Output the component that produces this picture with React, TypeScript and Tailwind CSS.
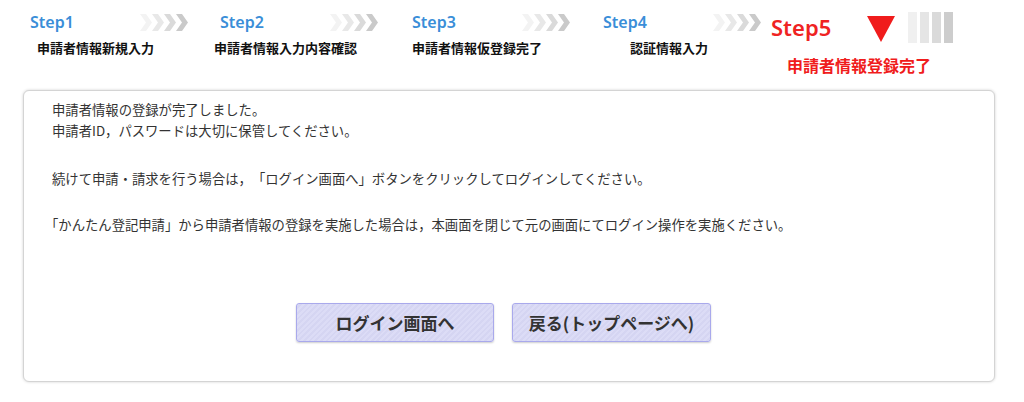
import React from "react";

const Chevrons = () => {
  const colors = ["#f3f3f3", "#e8e8e8", "#dadada", "#cacaca"];
  return (
    <svg width="48" height="17" viewBox="0 0 48 17">
      {colors.map((c, i) => {
        const x = i * 12;
        return (
          <polygon
            key={i}
            points={`${x},0 ${x + 6},0 ${x + 12},8.5 ${x + 6},17 ${x},17 ${x + 6},8.5`}
            fill={c}
          />
        );
      })}
    </svg>
  );
};

const steps = [
  { n: "Step1", label: "申請者情報新規入力", w: "w-[190px]", ml: "ml-[7px]" },
  { n: "Step2", label: "申請者情報入力内容確認", w: "w-[192px]", ml: "ml-[-6px]" },
  { n: "Step3", label: "申請者情報仮登録完了", w: "w-[191px]", ml: "ml-0" },
  { n: "Step4", label: "認証情報入力", w: "w-[168px]", ml: "ml-[27px]" },
];

export default function App() {
  const font = "font-['Noto_Sans','Noto_Sans_CJK_JP',sans-serif]";
  return (
    <div className={`w-[1024px] h-[402px] bg-white overflow-hidden ${font}`}>
      {/* Header steps */}
      <div className="flex items-start pl-[30px] pt-[10px] h-[90px]">
        {steps.map((s) => (
          <div key={s.n} className={`${s.w} shrink-0 flex flex-col`}>
            <div className="flex items-center h-[24px]">
              <span className="w-[110px] text-[16px] leading-[24px] font-semibold text-[#3a8ed8]">
                {s.n}
              </span>
              <Chevrons />
            </div>
            <div
              className={`${s.ml} mt-[5px] text-[13px] leading-[18px] font-bold text-[#111] whitespace-nowrap font-['Noto_Sans_CJK_JP',sans-serif]`}
            >
              {s.label}
            </div>
          </div>
        ))}
        <div className="flex flex-col shrink-0">
          <div className="flex items-center h-[32px] mt-[1px]">
            <span className="w-[96px] text-[22px] leading-[32px] font-semibold text-[#ef2323]">
              Step5
            </span>
            <svg width="28" height="26" viewBox="0 0 28 26" className="mt-[3px]">
              <polygon points="0,0 28,0 14,26" fill="#f01c1c" />
            </svg>
            <div className="flex gap-[3px] ml-[13px] h-[31px]">
              <div className="w-[9px] bg-[#f0f0f0]" />
              <div className="w-[9px] bg-[#e5e5e5]" />
              <div className="w-[9px] bg-[#dadada]" />
              <div className="w-[9px] bg-[#cdcdcd]" />
            </div>
          </div>
          <div className="ml-[16px] mt-[12px] text-[16px] leading-[20px] font-bold text-[#f01c1c] whitespace-nowrap font-['Noto_Sans_CJK_JP',sans-serif]">
            申請者情報登録完了
          </div>
        </div>
      </div>

      {/* Card */}
      <div className="ml-[23px] w-[972px] h-[292px] border border-[#d4d4d4] rounded-[6px] shadow-[0_0_3px_rgba(0,0,0,0.18)] bg-white pl-[28px] pt-[8px] text-[13.33px] leading-[21px] text-[#333] font-['Noto_Sans_CJK_JP',sans-serif] [text-spacing-trim:space-all] flex flex-col">
        <p>
          申請者情報の登録が完了しました。
          <br />
          申請者ID，パスワードは大切に保管してください。
        </p>
        <p className="mt-[27px]">
          続けて申請・請求を行う場合は，「ログイン画面へ」ボタンをクリックしてログインしてください。
        </p>
        <p className="mt-[25px] ml-[-7px]">
          「かんたん登記申請」から申請者情報の登録を実施した場合は，本画面を閉じて元の画面にてログイン操作を実施ください。
        </p>
        <div className="flex justify-center gap-[18px] mt-[68px] pr-[39px]">
          <button className="w-[198px] h-[39px] rounded-[3px] border border-[#a9a9ec] shadow-[0_1px_2px_rgba(0,0,0,0.2)] bg-[repeating-linear-gradient(135deg,#dcdcf6_0px,#dcdcf6_2px,#d5d5f2_2px,#d5d5f2_4px)] text-[17px] font-bold text-[#333]">
            ログイン画面へ
          </button>
          <button className="w-[199px] h-[39px] rounded-[3px] border border-[#a9a9ec] shadow-[0_1px_2px_rgba(0,0,0,0.2)] bg-[repeating-linear-gradient(135deg,#dcdcf6_0px,#dcdcf6_2px,#d5d5f2_2px,#d5d5f2_4px)] text-[17px] font-bold text-[#333]">
            戻る(トップページへ)
          </button>
        </div>
      </div>
    </div>
  );
}
